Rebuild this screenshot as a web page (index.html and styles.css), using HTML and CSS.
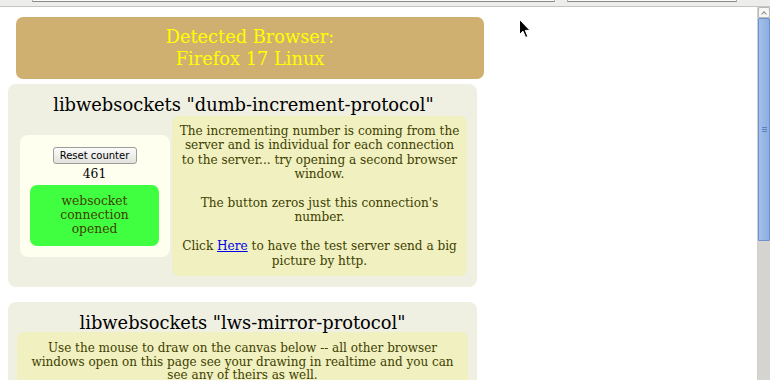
FILE: index.html
```html
<!DOCTYPE html>
<html>

<head>
    <title>Minimal Websocket test app</title>
    <link rel="stylesheet" href="styles.css">
</head>

<body>
    <div class="chrome">
        <div class="field field_url"></div>
        <div class="field field_search"></div>
    </div>
    <div class="window">
        <div class="page">
            <section class="browser">Detected Browser:<div id="brow">Firefox 17 Linux</div></section>

            <div class="group2">
                <div class="title">libwebsockets "dumb-increment-protocol"</div>
                <div class="row">
                    <div class="content">
                        <button class="reset_btn">Reset counter</button>
                        <div class="number" id="number">461</div>
                        <div class="explain status" id="wsdi_status">websocket connection opened</div>
                    </div>
                    <div class="explain info">
                        The incrementing number is coming from the server and is individual for each connection to the server... try opening a second browser window.
                        <br><br>
                        The button zeros just this connection's number.
                        <br><br>
                        Click <a href="#">Here</a> to have the test server send a big picture by http.
                    </div>
                </div>
            </div>

            <div class="group2 second">
                <div class="title">libwebsockets "lws-mirror-protocol"</div>
                <div class="explain wide">
                    Use the mouse to draw on the canvas below -- all other browser windows open on this page see your drawing in realtime and you can see any of theirs as well.
                </div>
            </div>
        </div>
        <div class="scrollbar">
            <div class="scroll_up"><span class="chevron"></span></div>
            <div class="scroll_thumb"><span class="grip"></span></div>
            <div class="scroll_track"></div>
        </div>
    </div>
    <svg class="cursor" width="12" height="20" viewBox="0 0 12 20">
        <path d="M0.5 0.5 L0.5 15.5 L4 12.2 L6.6 18.4 L8.8 17.5 L6.3 11.4 L11 11.4 Z" fill="#000" stroke="#fff" stroke-width="1"/>
    </svg>
</body>

</html>
```

FILE: styles.css
```css
html,
body {
    margin: 0;
    height: 380px;
    overflow: hidden;
}

body {
    background: #ffffff;
    font-family: "DejaVu Serif", serif;
    font-size: 12.3px;
    line-height: 14.3px;
    color: #404000;
}

/* cut off browser toolbar at the very top */
.chrome {
    display: flex;
    height: 6px;
    background: #ededeb;
    border-bottom: 1px solid #c4c4c0;
}

.field {
    height: 1px;
    background: #fbfbfb;
    border: 1px solid #b4b4b0;
    border-top: 0;
    border-bottom-color: #8a8a88;
}

.field_url {
    margin-left: 32px;
    width: 521px;
}

.field_search {
    margin-left: 12px;
    width: 168px;
}

.window {
    display: flex;
    height: 373px;
}

.page {
    flex: 1;
    padding: 10px 0 0 8px;
}

.browser {
    display: block;
    width: 468px;
    margin-left: 8px;
    padding: 9px 0;
    box-sizing: border-box;
    font-size: 17.8px;
    line-height: 22px;
    text-align: center;
    color: #ffff00;
    background: #d0b070;
    border-radius: 7px;
}

.group2 {
    width: 469px;
    margin-top: 5px;
    padding: 9px 10px 11px 12px;
    box-sizing: border-box;
    text-align: center;
    background: #efefe2;
    border-radius: 8px;
}

.group2.second {
    margin-top: 15px;
    padding: 9px 9px 0 9px;
    height: 90px;
}

.title {
    font-size: 17.85px;
    line-height: 23px;
    color: #000000;
}

.row {
    display: flex;
    align-items: center;
    gap: 2px;
}

.content {
    width: 150px;
    flex-shrink: 0;
    padding: 12px 11px 11px 10px;
    box-sizing: border-box;
    background: #fffff0;
    border-radius: 8px;
}

.reset_btn {
    display: block;
    width: 84px;
    height: 17px;
    margin: 0 auto;
    padding: 0;
    font-family: "DejaVu Sans", sans-serif;
    font-size: 10px;
    color: #000000;
    background: linear-gradient(#fbfbfa, #e2e2de);
    border: 1px solid #9c9c98;
    border-radius: 3px;
}

.number {
    margin-top: 3px;
    color: #000000;
}

.explain {
    padding: 8px 9px;
    text-align: center;
    background: #f0f0c0;
    border-radius: 7px;
    color: #404000;
}

.explain.info {
    width: 295px;
    flex-shrink: 0;
    padding: 8px 6px;
    box-sizing: border-box;
    font-size: 12.1px;
    line-height: 14.4px;
}

.explain.status {
    margin-top: 3px;
    padding: 9px 12px;
    background: #40ff40;
}

.explain.wide {
    margin-top: -2px;
    padding-top: 10px;
    font-size: 12px;
    line-height: 13.7px;
}

a {
    color: #0000ee;
}

/* firefox style scrollbar */
.scrollbar {
    display: flex;
    flex-direction: column;
    width: 12px;
    border-left: 1px solid #cfcfcb;
    background: #d6d4d0;
}

.scroll_up {
    display: flex;
    justify-content: center;
    height: 9px;
    background: #f6f6f4;
    border: 1px solid #b8b8b4;
    border-radius: 2px;
}

.chevron {
    width: 3px;
    height: 3px;
    margin-top: 4px;
    border-top: 1px solid #8a8a88;
    border-left: 1px solid #8a8a88;
    transform: rotate(45deg);
}

.scroll_thumb {
    display: flex;
    align-items: center;
    justify-content: center;
    height: 221px;
    background: linear-gradient(90deg, #a3c0ea, #8cade0);
    border: 1px solid #6f92cc;
    border-radius: 1px;
}

.grip {
    width: 5px;
    height: 1px;
    margin-top: -4px;
    background: #5a7fbf;
    box-shadow: 0 2px 0 #5a7fbf, 0 4px 0 #5a7fbf;
}

.scroll_track {
    flex: 1;
    background: #d6d4d0;
}

.cursor {
    position: absolute;
    left: 519px;
    top: 19px;
}
```
